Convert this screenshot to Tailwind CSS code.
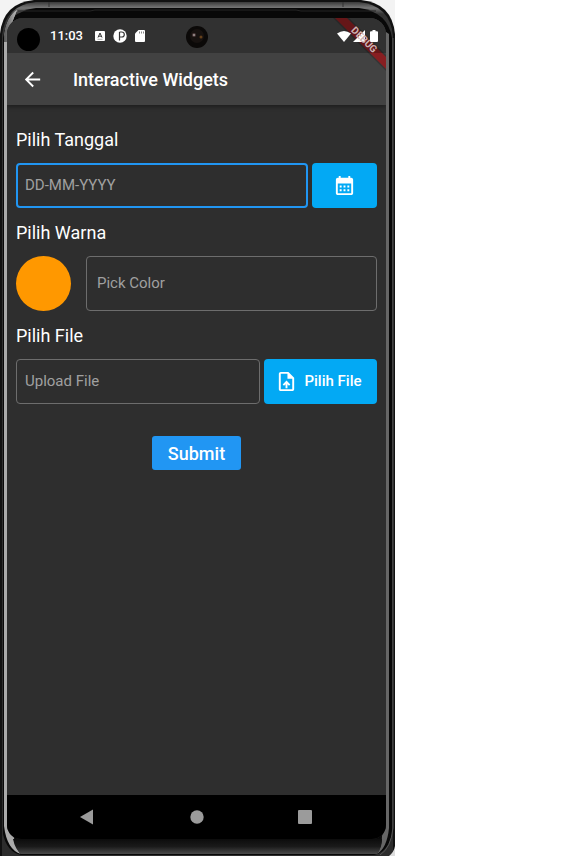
<!DOCTYPE html>
<html lang="id">
<head>
<meta charset="utf-8">
<meta name="viewport" content="width=device-width, initial-scale=1">
<title>Interactive Widgets</title>
<script src="https://cdn.jsdelivr.net/npm/@tailwindcss/browser@4"></script>
</head>
<body class="bg-white font-['Roboto',sans-serif] text-white">
<div class="relative isolate flex min-h-screen w-full max-w-[395px] flex-col pt-[18px] pr-[9px] pb-[17px] pl-[7px]">

  <!-- Phone casing -->
  <svg class="absolute inset-0 -z-10 h-full w-full" viewBox="0 0 395 856" preserveAspectRatio="none" aria-hidden="true">
    <defs>
      <linearGradient id="rim" x1="0" y1="0" x2="0" y2="1">
        <stop offset="0" stop-color="#3a3a3a"/><stop offset=".007" stop-color="#777"/><stop offset=".014" stop-color="#333"/><stop offset="1" stop-color="#2c2c2c"/>
      </linearGradient>
      <linearGradient id="foot" x1="0" y1="0" x2="0" y2="1">
        <stop offset="0" stop-color="#0c0c0c"/><stop offset=".5" stop-color="#1a1a1a"/><stop offset="1" stop-color="#4a4a4a"/>
      </linearGradient>
      <linearGradient id="glint" x1="0" y1="0" x2="1" y2="0">
        <stop offset="0" stop-color="#555"/><stop offset="1" stop-color="#bbb"/>
      </linearGradient>
    </defs>
    <rect width="395" height="60" fill="#f3f3f3"/>
    <path d="M0 856V34Q3 3 34 0H361Q392 3 395 34V856Z" fill="#111"/>
    <path d="M2 856V36Q5 5 36 2H359Q390 5 393 36V856Z" fill="url(#rim)"/>
    <path d="M49 2V7M343 2V7" stroke="#333"/>
    <path d="M3 834V38Q6 12 36 8H359Q388 12 392 38V834Q388 852 374 855H21Q7 852 3 834Z" fill="#080808"/>
    <path d="M18 11H90L95 10H296L301 11H376" fill="none" stroke="#242424"/>
    <path d="M4 826V36Q7 16 17 10Q13 22 7 32V822Q12 830 14 838Q16 850 21 854Q7 850 4 826Z" fill="#aaa"/>
    <path d="M4 36Q7 16 17 10Q13 22 7 32V42H4Z" fill="url(#glint)"/>
    <path d="M386 32L389 34V828Q387 848 377 854Q382 846 382 836L386 822Z" fill="#666"/>
    <path d="M393 38V828Q391 848 380 855" fill="none" stroke="#555"/>
    <path d="M13 839H382Q382 848 377 854H21Q15 849 13 839Z" fill="url(#foot)"/>
    <path d="M389 856Q394 852 395 846V856Z" fill="#ddd"/>
  </svg>

  <div class="relative flex flex-1 flex-col overflow-hidden rounded-t-[16px] rounded-b-[14px] bg-[#2e2e2e]">

    <header class="relative z-10 bg-[#424242] shadow-[0_2px_4px_rgba(0,0,0,0.35)]">
      <!-- Debug banner -->
      <svg class="absolute top-0 right-0" width="56" height="56" viewBox="0 0 56 56" role="img" aria-label="Debug banner">
        <path d="M3 0H19L56 37V53Z" fill="#000" fill-opacity=".2"/>
        <path d="M5 0H17L56 39V51Z" fill="#871e21"/>
      </svg>

      <div class="relative flex h-[35px] items-center bg-black/25 pt-px pr-2 pl-[43px]">
        <span class="absolute top-[10px] left-[10px] size-[23px] rounded-full bg-black"></span>
        <span class="absolute top-2 left-1/2 size-[22px] -translate-x-1/2 rounded-full bg-[#0b0908]">
          <svg viewBox="0 0 22 22" class="size-full" aria-hidden="true"><circle cx="11" cy="10" r="7" fill="#171210"/><circle cx="8" cy="9" r="2" fill="#4c3a3a"/><circle cx="8" cy="9" r="1" fill="#a39a99"/><circle cx="15" cy="11" r="1.500" fill="#65401a"/></svg>
        </span>
        <span class="text-[13px] font-medium">11:03</span>
        <svg class="ml-3 size-[10px]" viewBox="0 0 10 10" aria-hidden="true"><rect width="10" height="10" rx="1" fill="#fff"/><path d="M3 6.500 5 2 7 6.500M3.700 5.200H6.300" fill="none" stroke="#333"/><path d="M2.500 8.300H7.500" stroke="#888" stroke-width=".7"/></svg>
        <svg class="ml-2 size-[14px]" viewBox="0 0 14 14" aria-hidden="true"><circle cx="7" cy="7" r="6.700" fill="#fff"/><path d="M6.800 3.200V11H5.500V7.500H4V3.200Z" fill="#fff"/><path d="M6.500 3V11.500M6.500 8H8.800A2.500 2.500 0 0 0 8.800 3H6.500" fill="none" stroke="#333" stroke-width="1.200"/></svg>
        <svg class="ml-2 h-3 w-[10px]" viewBox="0 0 10 12" aria-hidden="true"><path d="M3.500 0H9Q10 0 10 1V11Q10 12 9 12H1Q0 12 0 11V3.500Z" fill="#fff"/><path d="M4.500 1.500V3.500M6.500 1.500V3.500M8.500 1.500V3.500" stroke="#555" stroke-width=".7"/></svg>
        <svg class="ml-auto h-[11px] w-[14px]" viewBox="0 0 14 11" aria-hidden="true"><path d="M0 2.500Q7-2.500 14 2.500L7 11Z" fill="#fff"/></svg>
        <svg class="ml-[2px] size-3" viewBox="0 0 12 12" aria-hidden="true"><path d="M0 12 12 0V12Z" fill="#fff"/></svg>
        <svg class="ml-[5px] h-3 w-2" viewBox="0 0 8 12" aria-hidden="true"><path d="M2.500 0H5.500V1.200H7Q8 1.200 8 2.200V11Q8 12 7 12H1Q0 12 0 11V2.200Q0 1.200 1 1.200H2.500Z" fill="#fff"/></svg>
        <svg class="absolute top-0 right-0" width="56" height="35" viewBox="0 0 56 35" overflow="visible" aria-hidden="true">
          <text x="34" y="25" transform="rotate(45 34 22)" text-anchor="middle" font-family="Roboto" font-size="10" font-weight="700" fill="#cdb4b4">DEBUG</text>
        </svg>
      </div>

      <div class="relative flex h-[52px] items-center gap-[29px] pl-[14px]">
        <button type="button" aria-label="Kembali" class="size-[23px]">
          <svg viewBox="0 0 24 24" class="size-full" fill="#fff" aria-hidden="true"><path d="M20 11H7.830l5.590-5.590L12 4l-8 8 8 8 1.410-1.410L7.830 13H20v-2z"/></svg>
        </button>
        <h1 class="text-[18px] font-medium">Interactive Widgets</h1>
      </div>
    </header>

    <form class="flex flex-1 flex-col gap-3 px-[9px] pt-[22px]" onsubmit="return false">
      <label for="tanggal" class="pt-[2px] text-[18px] leading-[22px]">Pilih Tanggal</label>
      <div class="flex h-[45px] gap-1">
        <input id="tanggal" type="text" placeholder="DD-MM-YYYY" class="min-w-0 flex-1 rounded-[4px] border-2 border-[#2196f3] px-[7px] text-[15px] outline-none placeholder:text-[#a0a0a0]">
        <button type="button" aria-label="Pilih Tanggal" class="flex w-[65px] items-center justify-center rounded-[4px] bg-[#03a9f4]">
          <svg class="size-[23px]" viewBox="0 0 24 24" aria-hidden="true"><path d="M19 4h-1V2h-2v2H8V2H6v2H5c-1.110 0-1.990.9-1.990 2L3 20c0 1.100.890 2 2 2h14c1.100 0 2-.9 2-2V6c0-1.100-.9-2-2-2zm0 16H5V10h14v10z" fill="#fff"/><path d="M7 12h2v2H7zM11 12h2v2h-2zM15 12h2v2h-2zM7 16h2v2H7zM11 16h2v2h-2zM15 16h2v2h-2z" fill="#fff"/></svg>
        </button>
      </div>

      <label for="warna" class="pt-[2px] text-[18px] leading-[22px]">Pilih Warna</label>
      <div class="flex h-[55px] gap-[15px]">
        <span class="size-[55px] shrink-0 rounded-full bg-[#ff9800]"></span>
        <input id="warna" type="text" placeholder="Pick Color" class="min-w-0 flex-1 rounded-[4px] border border-[#6d6d6d] px-[10px] text-[15px] outline-none placeholder:text-[#a0a0a0]">
      </div>

      <label for="file" class="pt-[2px] text-[18px] leading-[22px]">Pilih File</label>
      <div class="flex h-[45px] gap-1">
        <input id="file" type="text" placeholder="Upload File" class="min-w-0 flex-1 rounded-[4px] border border-[#6d6d6d] px-2 text-[15px] outline-none placeholder:text-[#a0a0a0]">
        <button type="button" class="flex w-[113px] items-center justify-center gap-[6px] rounded-[4px] bg-[#03a9f4] pr-1 text-[15px] font-medium">
          <svg class="size-[23px]" viewBox="0 0 24 24" fill="#fff" aria-hidden="true"><path d="M14 2H6c-1.100 0-1.990.9-1.990 2L4 20c0 1.100.890 2 1.990 2H18c1.100 0 2-.9 2-2V8l-6-6zm4 18H6V4h7v5h5v11zM8 15.010l1.410 1.410L11 14.840V19h2v-4.160l1.590 1.590L16 15.010 12.010 11 8 15.010z"/></svg>
          Pilih File
        </button>
      </div>

      <button type="submit" class="mt-5 h-[34px] w-[89px] self-center rounded-[3px] bg-[#2196f3] text-[18px] font-medium">Submit</button>
    </form>

    <nav class="flex h-11 items-center justify-around bg-black px-[26px]" aria-label="Navigasi sistem">
      <button type="button" aria-label="Kembali"><svg class="size-4" viewBox="0 0 16 16" aria-hidden="true"><path d="M0 8 13 .500V15.500Z" fill="#9b9b9b"/></svg></button>
      <button type="button" aria-label="Beranda"><svg class="size-4" viewBox="0 0 16 16" aria-hidden="true"><circle cx="8" cy="8" r="6.700" fill="#9b9b9b"/></svg></button>
      <button type="button" aria-label="Aplikasi terbaru"><svg class="size-4" viewBox="0 0 16 16" aria-hidden="true"><rect x="0" y="1" width="14" height="14" rx="1" fill="#9b9b9b"/></svg></button>
    </nav>
  </div>
</div>
</body>
</html>
